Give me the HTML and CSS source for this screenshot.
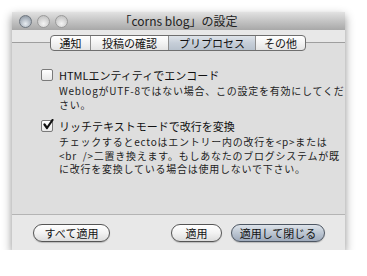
FILE: index.html
```html
<!DOCTYPE html>
<html lang="ja">
<head>
<meta charset="UTF-8">
<title>「corns blog」の設定</title>
<link rel="stylesheet" href="styles.css">
</head>
<body>

<div class="window">
  <div class="titlebar">
    <div class="lights">
      <span class="light close"></span>
      <span class="light"></span>
      <span class="light"></span>
    </div>
    <div class="title">「corns blog」の設定</div>
  </div>

  <div class="tabhead"></div>

  <div class="panel">
    <div class="tabs">
      <div class="tab t1">通知</div>
      <div class="tab t2">投稿の確認</div>
      <div class="tab t3 selected">プリプロセス</div>
      <div class="tab t4">その他</div>
    </div>

    <div class="option first">
      <span class="checkbox"></span>
      <div class="option-text">
        <div class="label">HTMLエンティティでエンコード</div>
        <div class="desc">WeblogがUTF-8ではない場合、この設定を有効にしてくだ<br>さい。</div>
      </div>
    </div>

    <div class="option">
      <span class="checkbox checked">
        <svg width="12" height="12" viewBox="0 0 12 12"><path d="M2.5 5.5 L5 9 L10.5 1" fill="none" stroke="#111" stroke-width="2.2" stroke-linecap="round" stroke-linejoin="round"/></svg>
      </span>
      <div class="option-text">
        <div class="label">リッチテキストモードで改行を変換</div>
        <div class="desc">チェックするとectoはエントリー内の改行を&lt;p&gt;または<br>&lt;br&nbsp; /&gt;二置き換えます。もしあなたのブログシステムが既<br>に改行を変換している場合は使用しないで下さい。</div>
      </div>
    </div>
  </div>

  <div class="footer">
    <button type="button" class="btn all">すべて適用</button>
    <div class="spacer"></div>
    <button type="button" class="btn apply">適用</button>
    <button type="button" class="btn default">適用して閉じる</button>
  </div>
</div>

</body>
</html>
```

FILE: styles.css
```css
body {
  margin: 0;
  padding: 12px 0 0 12px;
  background: #fff;
  font-family: "Noto Sans CJK JP", "Noto Sans", sans-serif;
  color: #1a1a1a;
}
.window {
  width: 333px;
  height: 238px;
  background: #e6e6e6;
  box-shadow: 0 4px 9px rgba(0, 0, 0, 0.45);
  display: flex;
  flex-direction: column;
}
.titlebar {
  height: 18px;
  background: linear-gradient(#e2e2e2, #c4c4c4 50%, #a8a8a8);
  display: flex;
  align-items: center;
  position: relative;
}
.lights {
  display: flex;
  gap: 5px;
  padding-left: 7px;
}
.light {
  width: 11px;
  height: 11px;
  border-radius: 50%;
  border: 1px solid #9a9a9a;
  background: radial-gradient(circle at 50% 70%, #f4f4f4, #cfcfcf 60%, #b8b8b8);
}
.light.close {
  border-color: #6f7780;
  background: radial-gradient(circle at 50% 70%, #e8edf2, #a9b2bc 60%, #7f8893);
}
.title {
  position: absolute;
  left: 0;
  right: 0;
  top: 0;
  line-height: 18px;
  text-align: center;
  font-size: 12px;
  color: #222;
}
.tabhead {
  height: 12px;
  background: #e8e8e8;
}
.panel {
  height: 171px;
  border-top: 1px solid #9e9e9e;
  border-bottom: 1px solid #b4b4b4;
  background: #dedede;
}
.tabs {
  display: flex;
  width: 256px;
  height: 16px;
  margin: -8px 0 0 38px;
  border: 1px solid #6e6e6e;
  border-radius: 4px;
  background: linear-gradient(#ffffff, #f3f3f3 50%, #e4e4e4);
  overflow: hidden;
  box-sizing: border-box;
}
.tab {
  font-size: 11px;
  line-height: 14px;
  text-align: center;
  color: #111;
  border-right: 1px solid #8e8e8e;
}
.tab:last-child {
  border-right: none;
}
.t1 { width: 39px; }
.t2 { width: 77px; }
.t3 { width: 86px; }
.t4 { flex: 1; }
.tab.selected {
  background: linear-gradient(#dfe4ea, #c6ced8 50%, #b8c2cd);
}
.option {
  display: flex;
  margin: 8px 0 0 29px;
}
.option.first {
  margin-top: 17px;
}
.checkbox {
  width: 12px;
  height: 12px;
  margin-top: 1px;
  box-sizing: border-box;
  border: 1px solid #7a7a7a;
  border-radius: 2px;
  background: linear-gradient(#ffffff, #e8e8e8);
  position: relative;
}
.checkbox svg {
  position: absolute;
  left: 0;
  top: -2px;
}
.option-text {
  margin-left: 6px;
}
.label {
  font-size: 11px;
  line-height: 14px;
  color: #111;
}
.desc {
  margin-top: 2px;
  font-size: 10px;
  line-height: 13.5px;
  letter-spacing: 0.75px;
  color: #222;
  white-space: nowrap;
}
.footer {
  flex: 1;
  display: flex;
  align-items: flex-start;
  padding: 9px 20px 0 21px;
  background: #e8e8e8;
}
.spacer {
  flex: 1;
}
.btn {
  height: 18px;
  padding: 0;
  border: 1px solid #555;
  border-radius: 9px;
  background: linear-gradient(#ffffff, #f2f2f2 50%, #dcdcdc);
  font-family: "Noto Sans CJK JP", "Noto Sans", sans-serif;
  font-size: 11px;
  line-height: 16px;
  color: #111;
  box-shadow: 0 1px 1px rgba(0, 0, 0, 0.2);
}
.btn.all { width: 77px; }
.btn.apply { width: 51px; }
.btn.default {
  width: 94px;
  margin-left: 9px;
  border-color: #4d5662;
  background: linear-gradient(#dde3ea, #bcc6d2 50%, #9eaabb);
}
```
